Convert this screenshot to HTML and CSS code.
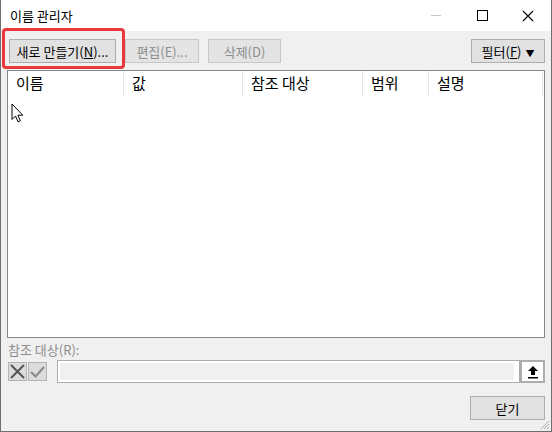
FILE: index.html
```html
<!DOCTYPE html>
<html>
<head>
    <meta charset="utf-8">
    <link rel="stylesheet" href="styles.css">
    <title>이름 관리자</title>
</head>
<body>
<div class="window">
    <div class="titlebar">
        <span class="title">이름 관리자</span>
        <div class="caption-btns">
            <span class="cap-btn cap-min"></span>
            <span class="cap-btn"><span class="cap-max"></span></span>
            <span class="cap-btn">
                <svg width="12" height="12" viewBox="0 0 12 12"><path d="M1 1 L11 11 M11 1 L1 11" stroke="#000" stroke-width="1.1"/></svg>
            </span>
        </div>
    </div>

    <div class="body">
        <div class="toolbar">
            <div class="highlight">
                <button class="btn btn-new">새로 만들기(<u>N</u>)...</button>
            </div>
            <button class="btn btn-edit" disabled>편집(E)...</button>
            <button class="btn btn-del" disabled>삭제(D)</button>
            <span class="spacer"></span>
            <button class="btn btn-filter">필터(<u>F</u>) <span class="caret">&#9660;</span></button>
        </div>

        <div class="list">
            <div class="list-head">
                <div class="col col-name">이름</div>
                <div class="col col-val">값</div>
                <div class="col col-ref">참조 대상</div>
                <div class="col col-scope">범위</div>
                <div class="col col-desc">설명</div>
            </div>
        </div>

        <div class="ref-label">참조 대상(R):</div>
        <div class="ref-row">
            <span class="mini-btn">
                <svg width="17" height="17" viewBox="0 0 17 17"><path d="M2 2 L15 15 M15 2 L2 15" stroke="#555" stroke-width="2"/></svg>
            </span>
            <span class="mini-btn">
                <svg width="17" height="17" viewBox="0 0 17 17"><path d="M2 9 L6.5 13.5 L15 4" stroke="#888" stroke-width="2" fill="none"/></svg>
            </span>
            <div class="ref-input"><div class="ref-inner"></div></div>
            <span class="collapse-btn">
                <svg width="14" height="14" viewBox="0 0 14 14"><path d="M7 1 L12 6 L9 6 L9 10 L5 10 L5 6 L2 6 Z" fill="#000"/><rect x="2" y="12" width="10" height="1.5" fill="#000"/></svg>
            </span>
        </div>

        <div class="footer">
            <button class="btn btn-close">닫기</button>
        </div>
    </div>

    <svg class="grip" width="10" height="10" viewBox="0 0 10 10"><path d="M9 1 L1 9 M9 4 L4 9 M9 7 L7 9" stroke="#aaa" stroke-width="1"/></svg>
    <svg class="cursor" width="13" height="20" viewBox="0 0 13 20"><path d="M1 1 L1 16.5 L4.5 13 L7 18.8 L9.3 17.8 L6.9 12.2 L11.8 12.2 Z" fill="#fff" stroke="#000" stroke-width="1"/></svg>
</div>
</body>
</html>
```

FILE: styles.css
```css
* { margin: 0; padding: 0; box-sizing: border-box; }
html, body { width: 552px; height: 432px; overflow: hidden; }
body { font-family: "Noto Sans CJK KR", "Noto Sans", sans-serif; font-size: 13px; color: #000; }

.window { position: relative; width: 552px; height: 432px;
          border: 1px solid #6f6f6f; border-top: none;
          display: flex; flex-direction: column; background: #f0f0f0; }

.titlebar { height: 31px; background: #fff; display: flex; align-items: center; }
.title { padding-left: 9px; font-size: 13px; flex: 1; }
.caption-btns { display: flex; height: 100%; }
.cap-btn { width: 46px; height: 31px; display: flex; align-items: center; justify-content: center; }
.cap-min::before { content: ""; width: 10px; height: 1px; background: #c8c8c8; margin-top: 0; }
.cap-max { width: 11px; height: 11px; border: 1px solid #000; }

.body { flex: 1; display: flex; flex-direction: column; padding: 0 6px 0 6px; }

.toolbar { display: flex; align-items: flex-start; height: 39px; }
.toolbar > .btn { margin-top: 8px; }
.highlight { margin-left: -5px; margin-top: -3px; padding: 8px 6px 3px 4px;
             border: 3px solid #e8383c; border-radius: 4px; }
.btn { font-family: inherit; font-size: 13px; height: 24px; background: #e1e1e1;
       border: 1px solid #adadad; color: #000; padding: 0 4px; white-space: nowrap; }
.btn:disabled { background: #e4e4e4; border-color: #c8c8c8; color: #8d8d8d; }
.btn-new { width: 107px; }
.btn-edit { width: 74px; margin-left: 0; }
.btn-del { width: 73px; margin-left: 9px; }
.spacer { flex: 1; }
.btn-filter { width: 74px; }
.caret { font-size: 9px; margin-left: 1px; }

.list { height: 268px; background: #fff; border: 1px solid #828790; position: relative; z-index: 0; }
.list-head { display: flex; height: 25px; align-items: stretch; }
.col { font-size: 15px; padding-left: 8px; border-right: 1px solid #e5e5e5; line-height: 23px; }
.col-name { width: 116px; }
.col-val { width: 119px; }
.col-ref { width: 120px; }
.col-scope { width: 66px; }
.col-desc { width: 114px; }

.ref-label { color: #8d8d8d; margin-top: 2px; height: 19px; line-height: 19px; padding-left: 1px; }
.ref-row { display: flex; align-items: center; height: 25px; }
.mini-btn { width: 19px; height: 19px; border: 1px solid #b4b4b4; background: #dcdcdc;
            display: flex; align-items: center; justify-content: center; margin-left: 1px; }
.ref-input { flex: 1; height: 23px; margin-left: 10px; border: 1px solid #adadad; background: #fff; padding: 2px 2px; }
.ref-inner { height: 100%; background: #f0f0f0; margin-right: 3px; }
.collapse-btn { width: 25px; height: 23px; border: 2px solid #adadad;
                background: #fff; display: flex; align-items: center; justify-content: center; }

.footer { display: flex; justify-content: flex-end; margin-top: 12px; }
.btn-close { width: 75px; }

.grip { position: absolute; right: 1px; bottom: 1px; }
.cursor { position: absolute; left: 10px; top: 103px; }
```
